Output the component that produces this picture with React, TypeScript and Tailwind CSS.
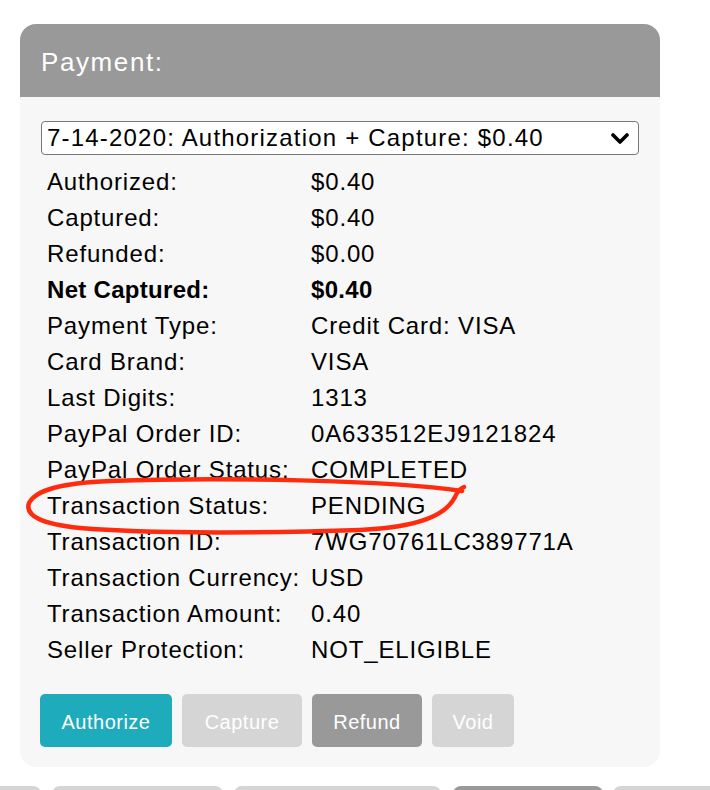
import React from "react";

const rows: { label: string; value: string; bold?: boolean }[] = [
  { label: "Authorized:", value: "$0.40" },
  { label: "Captured:", value: "$0.40" },
  { label: "Refunded:", value: "$0.00" },
  { label: "Net Captured:", value: "$0.40", bold: true },
  { label: "Payment Type:", value: "Credit Card: VISA" },
  { label: "Card Brand:", value: "VISA" },
  { label: "Last Digits:", value: "1313" },
  { label: "PayPal Order ID:", value: "0A633512EJ9121824" },
  { label: "PayPal Order Status:", value: "COMPLETED" },
  { label: "Transaction Status:", value: "PENDING" },
  { label: "Transaction ID:", value: "7WG70761LC389771A" },
  { label: "Transaction Currency:", value: "USD" },
  { label: "Transaction Amount:", value: "0.40" },
  { label: "Seller Protection:", value: "NOT_ELIGIBLE" },
];

export default function App() {
  return (
    <div className="relative w-[710px] h-[790px] overflow-hidden bg-white font-[family-name:'Liberation_Sans',Arial,sans-serif] text-black">
      <div className="ml-[20px] mt-[24px] w-[640px] rounded-[16px] bg-[#f7f7f7] overflow-hidden">
        <div className="h-[73px] bg-[#999999] pl-[21px] pt-[3px] flex items-center text-white text-[26px] tracking-[1.6px]">
          Payment:
        </div>
        <div className="pl-[21px] pr-[21px] pt-[24px] pb-[20px]">
          <div className="w-[598px] h-[34px] border border-[#767676] rounded-[4px] bg-white flex items-center justify-between pl-[5px] pr-[9px]">
            <span className="text-[24px] tracking-[1.2px] leading-none">
              7-14-2020: Authorization + Capture: $0.40
            </span>
            <svg width="18" height="12" viewBox="0 0 18 12" className="mt-[1px]">
              <polyline
                points="2,2 9,9 16,2"
                fill="none"
                stroke="#000"
                strokeWidth="3.6"
                strokeLinecap="round"
                strokeLinejoin="round"
              />
            </svg>
          </div>
          <div className="mt-[9px] pl-[6px] grid grid-cols-[264px_1fr] text-[24px] tracking-[0.85px] leading-[36px]">
            {rows.map((r) => (
              <React.Fragment key={r.label}>
                <div className={r.bold ? "font-bold tracking-[0.3px]" : ""}>{r.label}</div>
                <div className={r.bold ? "font-bold tracking-[0.3px]" : ""}>{r.value}</div>
              </React.Fragment>
            ))}
          </div>
          <div className="mt-[26px] -ml-[1px] flex gap-[10px] text-white text-[20px] tracking-[0.5px]">
            <div className="w-[132px] h-[53px] pt-[2px] rounded-[5px] bg-[#1eabbc] flex items-center justify-center">
              Authorize
            </div>
            <div className="w-[120px] h-[53px] pt-[2px] rounded-[5px] bg-[#d5d5d5] flex items-center justify-center">
              Capture
            </div>
            <div className="w-[110px] h-[53px] pt-[2px] rounded-[5px] bg-[#999999] flex items-center justify-center">
              Refund
            </div>
            <div className="w-[82px] h-[53px] pt-[2px] rounded-[5px] bg-[#d5d5d5] flex items-center justify-center">
              Void
            </div>
          </div>
        </div>
      </div>
      <div className="mt-[19px] flex gap-[11px]">
        <div className="w-[42px] h-[20px] rounded-tr-[8px] bg-[#d5d5d5]" />
        <div className="w-[176px] h-[20px] rounded-t-[8px] bg-[#d5d5d5]" />
        <div className="w-[212px] h-[20px] rounded-t-[8px] bg-[#d5d5d5]" />
        <div className="ml-[1px] w-[154px] h-[20px] rounded-t-[8px] bg-[#999999]" />
        <div className="-ml-[1px] w-[100px] h-[20px] rounded-tl-[8px] bg-[#d5d5d5]" />
      </div>
      <svg
        className="absolute left-0 top-0 pointer-events-none"
        width="710"
        height="790"
        viewBox="0 0 710 790"
      >
        <path
          d="M 462 491 C 390 480, 220 477, 110 481 C 60 483, 36 490, 29 503 C 25 515, 40 524, 80 528 C 150 534, 280 533, 360 530 C 420 527, 446 515, 455 497 C 457 492, 459 489, 464 487"
          fill="none"
          stroke="#ff2b0f"
          strokeWidth="4.5"
          strokeLinecap="round"
          strokeLinejoin="round"
        />
      </svg>
    </div>
  );
}
